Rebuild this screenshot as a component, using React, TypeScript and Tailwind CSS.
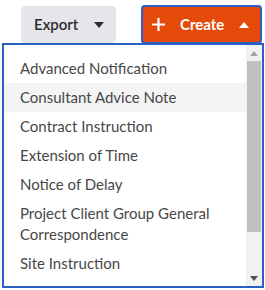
const items: string[] = [
  "Advanced Notification",
  "Consultant Advice Note",
  "Contract Instruction",
  "Extension of Time",
  "Notice of Delay",
  "Project Client Group General Correspondence",
  "Site Instruction",
];

const Caret = ({ up, color }: { up?: boolean; color: string }) => (
  <svg width="10" height="6" viewBox="0 0 10 6" className="shrink-0">
    <path d={up ? "M0 6 L5 0 L10 6 Z" : "M0 0 L10 0 L5 6 Z"} fill={color} />
  </svg>
);

const App = () => {
  return (
    <div className="w-[265px] h-[290px] bg-white font-['Lato',sans-serif] overflow-hidden">
      <div className="flex items-start pt-[5px]">
        <button className="ml-[21px] mt-[1px] w-[95px] h-[37px] rounded-[4px] bg-[#e4e6e9] flex items-center pl-[13px] gap-[16px] text-[15px] font-semibold text-[#2d2d2d]">
          <span>Export</span>
          <Caret color="#2d2d2d" />
        </button>
        <button className="ml-[25px] w-[121px] h-[39px] rounded-[4px] bg-[#e44b0a] border-2 border-[#2a5fc4] flex items-center pl-[9px] text-[15px] font-bold text-white relative z-10">
          <svg width="13" height="13" viewBox="0 0 13 13" className="shrink-0">
            <path d="M6.5 0 V13 M0 6.5 H13" stroke="white" strokeWidth="2.2" />
          </svg>
          <span className="ml-[15px]">Create</span>
          <span className="ml-[15px]">
            <Caret up color="white" />
          </span>
        </button>
      </div>
      <div className="ml-[2px] -mt-[1px] w-[262px] h-[245px] border-2 border-[#2a5fc4] bg-white flex">
        <ul className="flex-1 pt-[9px] text-[15px] text-[#474747] leading-[21px]">
          {items.map((item, i) => (
            <li
              key={item}
              className={`pl-[16px] pr-[10px] py-[4px] ${i === 1 ? "bg-[#f4f4f5]" : ""}`}
            >
              {item}
            </li>
          ))}
        </ul>
        <div className="w-[16px] bg-[#f1f1f1] flex flex-col items-center">
          <div className="h-[16px] flex items-center justify-center">
            <svg width="8" height="5" viewBox="0 0 8 5">
              <path d="M0 5 L4 0 L8 5 Z" fill="#a3a3a3" />
            </svg>
          </div>
          <div className="w-[14px] h-[171px] bg-[#c1c1c1]" />
          <div className="flex-1" />
          <div className="h-[16px] flex items-center justify-center">
            <svg width="8" height="5" viewBox="0 0 8 5">
              <path d="M0 0 L8 0 L4 5 Z" fill="#505050" />
            </svg>
          </div>
        </div>
      </div>
    </div>
  );
};

export default App;
